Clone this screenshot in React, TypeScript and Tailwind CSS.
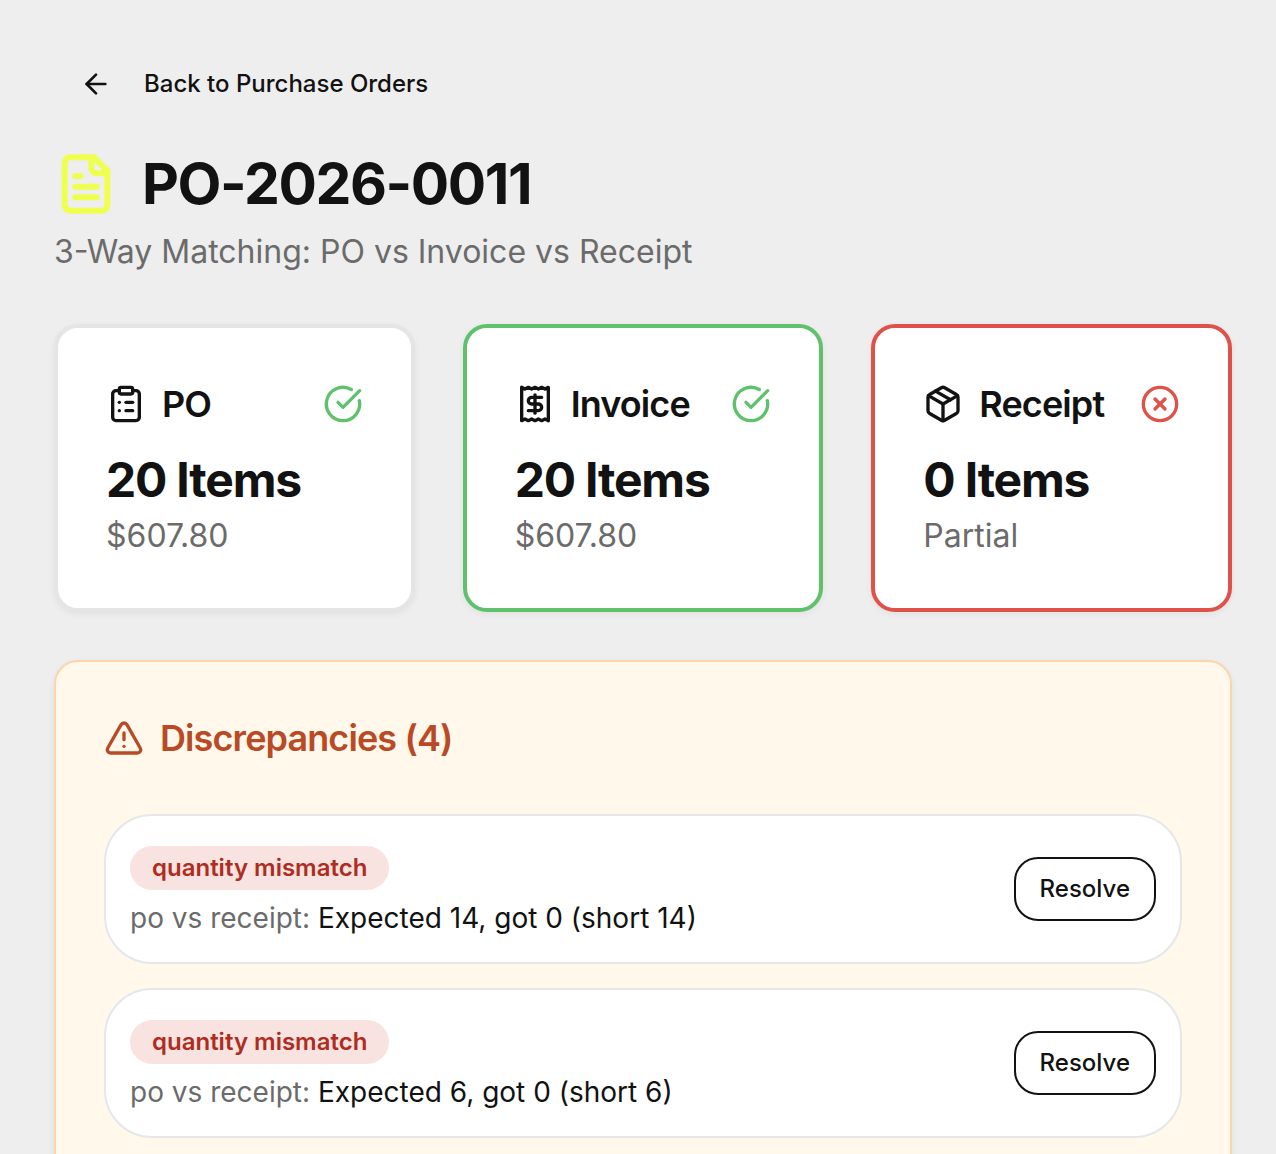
import type { ComponentType } from "react";
import clsx from "clsx";
import { ArrowLeft, CircleCheckBig, CircleX, ClipboardList, Package, TriangleAlert } from "lucide-react";

type IconProps = { size?: number; className?: string };

type Summary = {
  label: string;
  icon: ComponentType<IconProps>;
  count: number;
  detail: string;
  ok: boolean;
  border: string;
};

function FileTextIcon({ size = 24, className }: IconProps) {
  return (
    <svg
      width={size}
      height={size}
      viewBox="0 0 24 24"
      fill="none"
      stroke="currentColor"
      strokeWidth={2.25}
      strokeLinecap="round"
      strokeLinejoin="round"
      className={className}
      aria-hidden
    >
      <path d="M15 2H6a2 2 0 0 0-2 2v16a2 2 0 0 0 2 2h12a2 2 0 0 0 2-2V7Z" />
      <path d="M14 2v4a2 2 0 0 0 2 2h4" />
      <path d="M10 9H8" />
      <path d="M16 13H8" />
      <path d="M16 17H8" />
    </svg>
  );
}

function ReceiptIcon({ size = 24, className }: IconProps) {
  return (
    <svg
      width={size}
      height={size}
      viewBox="0 0 24 24"
      fill="none"
      stroke="currentColor"
      strokeWidth={2}
      strokeLinecap="round"
      strokeLinejoin="round"
      className={className}
      aria-hidden
    >
      <path d="M4 2v20l2-1 2 1 2-1 2 1 2-1 2 1 2-1 2 1V2l-2 1-2-1-2 1-2-1-2 1-2-1-2 1Z" />
      <path d="M16 8h-6a2 2 0 1 0 0 4h4a2 2 0 1 1 0 4H8" />
      <path d="M12 17.5v-11" />
    </svg>
  );
}

const summaries: Summary[] = [
  { label: "PO", icon: ClipboardList, count: 20, detail: "$607.80", ok: true, border: "border-[#e5e5e5]" },
  { label: "Invoice", icon: ReceiptIcon, count: 20, detail: "$607.80", ok: true, border: "border-[#5fc16c]" },
  { label: "Receipt", icon: Package, count: 0, detail: "Partial", ok: false, border: "border-[#df524a]" },
];

const totalDiscrepancies = 4;

const discrepancies = [
  { id: 1, type: "quantity mismatch", source: "po vs receipt", expected: 14, got: 0 },
  { id: 2, type: "quantity mismatch", source: "po vs receipt", expected: 6, got: 0 },
];

function SummaryCard({ label, icon: Icon, count, detail, ok, border }: Summary) {
  return (
    <div className={clsx("rounded-3xl border-4 bg-white p-12 shadow-[0_2px_6px_rgba(0,0,0,0.06)]", border)}>
      <div className="mb-4 flex items-center justify-between">
        <div className="flex items-center gap-4">
          <Icon size={40} className="shrink-0" />
          <h2 className="text-[36px] leading-14 font-semibold tracking-tight">{label}</h2>
        </div>
        {ok ? (
          <CircleCheckBig size={40} className="shrink-0 text-[#5fc16c]" />
        ) : (
          <CircleX size={40} className="shrink-0 text-[#df524a]" />
        )}
      </div>
      <p className="text-5xl leading-16 font-bold tracking-tight">{count} Items</p>
      <p className="text-[32px] leading-12 text-[#6b6b6b]">{detail}</p>
    </div>
  );
}

export default function App() {
  return (
    <main className="h-screen overflow-hidden bg-[#eeeeee] pt-[52px] pr-11 pl-[54px] font-['Inter',sans-serif] text-[#121212] antialiased">
      <a href="#purchase-orders" className="inline-flex h-16 items-center gap-8 px-[26px] text-2xl font-medium">
        <ArrowLeft size={32} />
        Back to Purchase Orders
      </a>

      <header className="mt-8">
        <div className="flex items-center gap-6">
          <FileTextIcon size={64} className="shrink-0 text-[#eeff4f]" />
          <h1 className="text-[57px] leading-[72px] font-bold tracking-tight">PO-2026-0011</h1>
        </div>
        <p className="mt-2 text-[32px] leading-12 text-[#6b6b6b]">3-Way Matching: PO vs Invoice vs Receipt</p>
      </header>

      <div className="mt-12 grid grid-cols-3 gap-12">
        {summaries.map((s) => (
          <SummaryCard key={s.label} {...s} />
        ))}
      </div>

      <section className="mt-12 rounded-3xl border-2 border-[#fbd5ad] bg-[#fff8eb] p-12 shadow-[0_2px_6px_rgba(0,0,0,0.06)]">
        <div className="flex items-center gap-4 text-[#b94a25]">
          <TriangleAlert size={40} />
          <h2 className="text-[36px] leading-14 font-semibold tracking-tight">Discrepancies ({totalDiscrepancies})</h2>
        </div>

        <ul className="mt-12 flex flex-col gap-6">
          {discrepancies.map((d) => (
            <li
              key={d.id}
              className="flex items-center justify-between rounded-[48px] border-2 border-[#e5e7eb] bg-white p-6"
            >
              <div className="flex flex-col items-start gap-2 pt-1.5">
                <span className="flex h-11 items-center rounded-full bg-[#f9e3e1] px-[22px] text-2xl font-semibold text-[#ad2d22]">
                  {d.type}
                </span>
                <p className="text-[28px] leading-10">
                  <span className="text-[#6b6b6b]">{d.source}:</span> Expected {d.expected}, got {d.got} (short{" "}
                  {d.expected - d.got})
                </p>
              </div>
              <button
                type="button"
                className="h-16 rounded-3xl border-2 border-[#121212] bg-white px-6 text-2xl font-medium"
              >
                Resolve
              </button>
            </li>
          ))}
        </ul>
      </section>
    </main>
  );
}
